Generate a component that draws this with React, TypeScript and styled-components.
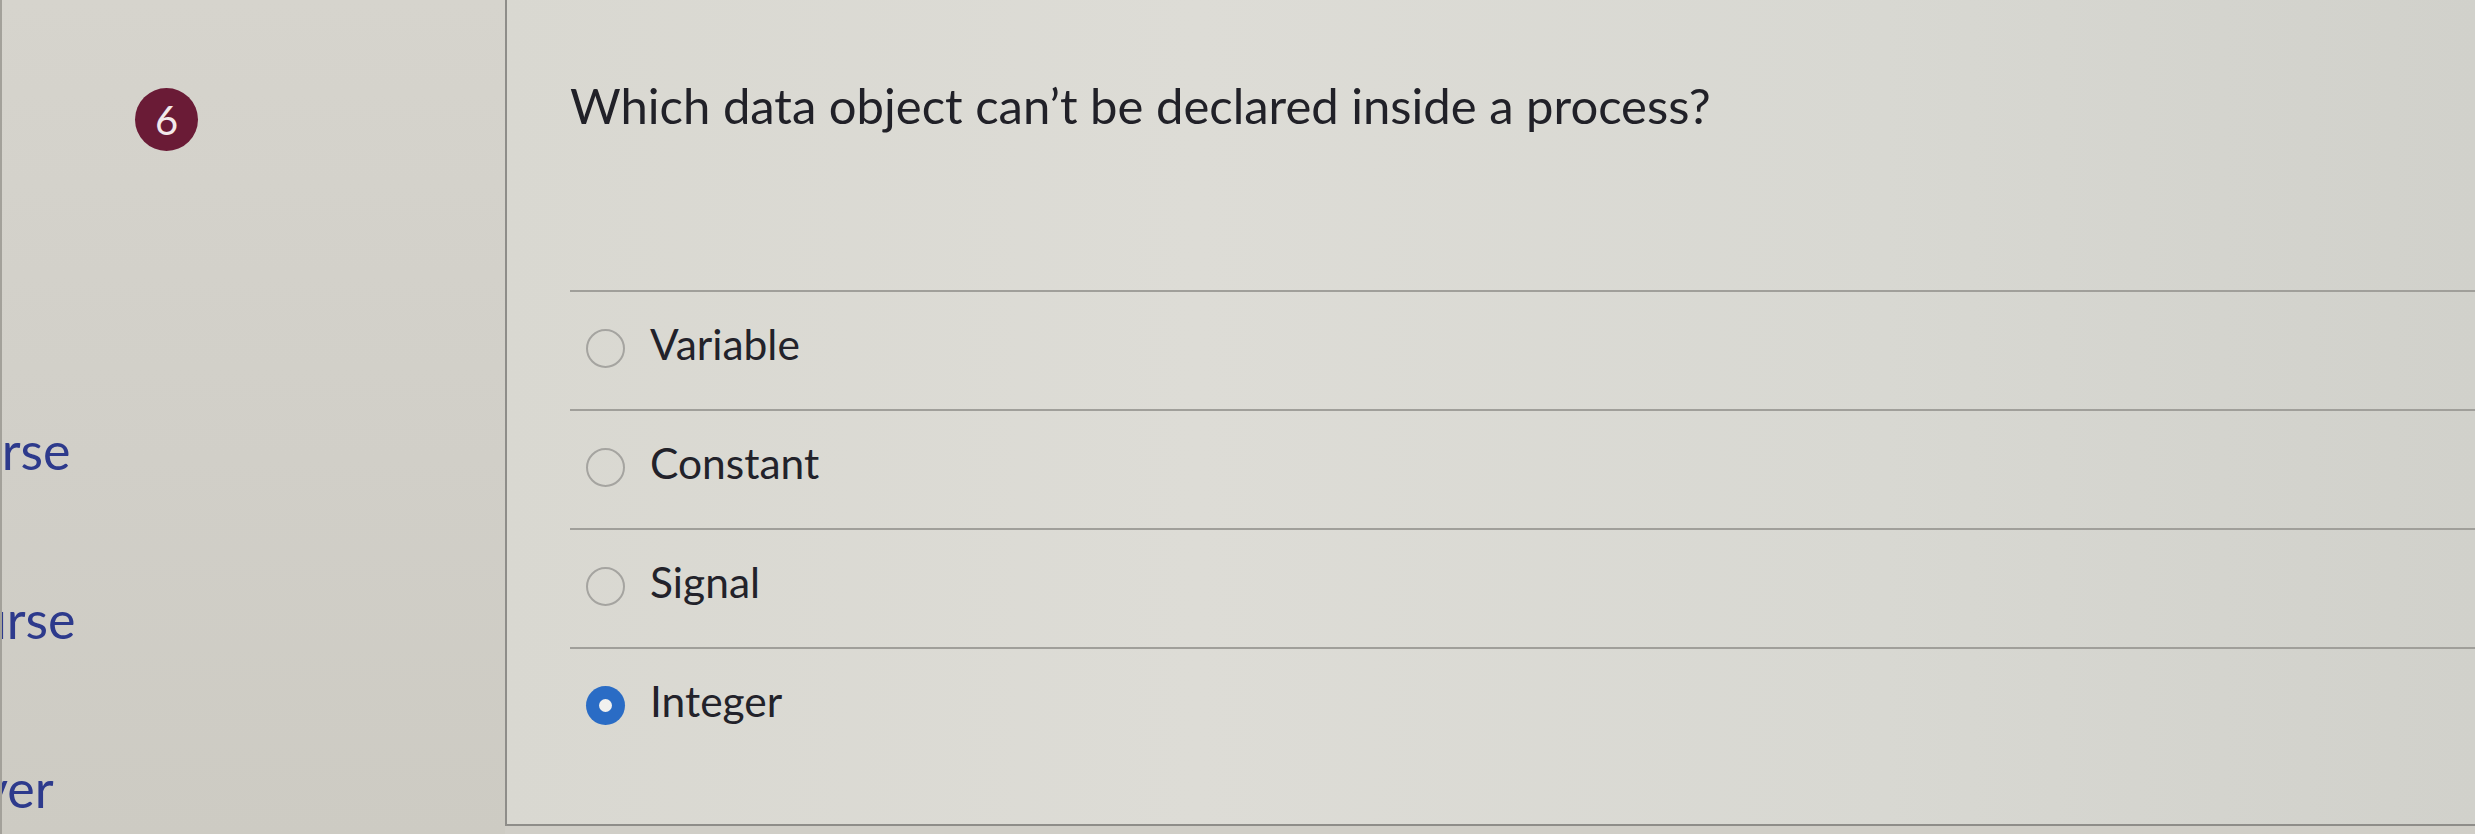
import React, { useState } from 'react';
import styled, { createGlobalStyle } from 'styled-components';

const options = ['Variable', 'Constant', 'Signal', 'Integer'];

const navLinks = [
  { label: 'Course', shift: -93 },
  { label: 'Course', shift: -88 },
  { label: 'Discover', shift: -148 },
];

const App: React.FC = () => {
  const [selected, setSelected] = useState('Integer');

  return (
    <>
      <GlobalStyle />
      <Page>
        <Sidebar>
          <NavList>
            {navLinks.map((link, i) => (
              <NavLink key={i} $shift={link.shift}>
                {link.label}
              </NavLink>
            ))}
          </NavList>
          <BadgeSlot>
            <Badge>6</Badge>
          </BadgeSlot>
        </Sidebar>

        <QuestionBox>
          <QuestionText>Which data object can’t be declared inside a process?</QuestionText>
          <OptionList>
            {options.map((opt, i) => (
              <OptionRow key={opt} $last={i === options.length - 1} onClick={() => setSelected(opt)}>
                <Radio $checked={selected === opt} />
                <OptionLabel>{opt}</OptionLabel>
              </OptionRow>
            ))}
          </OptionList>
        </QuestionBox>
      </Page>
    </>
  );
};

export default App;

const GlobalStyle = createGlobalStyle`
  html, body {
    margin: 0;
    padding: 0;
    overflow: hidden;
  }
  body {
    font-family: Lato, 'Open Sans', sans-serif;
    background: #cfcdc6;
  }
`;

const Page = styled.div`
  display: flex;
  width: 2475px;
  height: 834px;
  background: #d0cec7;
`;

const Sidebar = styled.aside`
  display: flex;
  width: 505px;
  flex-shrink: 0;
  box-sizing: border-box;
  border-left: 2px solid #a3a19a;
  background: linear-gradient(180deg, #d6d4cd 0%, #d1cfc8 55%, #cdcbc3 100%);
`;

const NavList = styled.nav`
  display: flex;
  flex-direction: column;
  width: 80px;
  padding-top: 366px;
  overflow: hidden;
`;

const NavLink = styled.a<{ $shift: number }>`
  display: block;
  margin-left: ${(p) => p.$shift}px;
  font-size: 52px;
  line-height: 169px;
  white-space: nowrap;
  color: #2d3a8c;
  text-decoration: none;
`;

const BadgeSlot = styled.div`
  padding-top: 88px;
  padding-left: 53px;
`;

const Badge = styled.div`
  display: flex;
  align-items: center;
  justify-content: center;
  width: 63px;
  height: 63px;
  border-radius: 50%;
  background: #6a1b36;
  color: #f2e9eb;
  font-size: 40px;
  line-height: 1;
`;

const QuestionBox = styled.section`
  display: flex;
  flex-direction: column;
  flex: 1;
  height: 826px;
  box-sizing: border-box;
  padding-left: 63px;
  border-left: 2px solid #8e8d89;
  border-bottom: 2px solid #8e8d89;
  background: linear-gradient(90deg, #d9d8d1 0%, #dddcd6 35%, #d8d8d2 70%, #d1d1cb 100%);
`;

const QuestionText = styled.h2`
  box-sizing: border-box;
  height: 290px;
  margin: 0;
  padding-top: 76px;
  font-size: 49px;
  font-weight: 400;
  line-height: 1.2;
  color: #212128;
`;

const OptionList = styled.div`
  display: flex;
  flex-direction: column;
  flex: 1;
`;

const OptionRow = styled.label<{ $last?: boolean }>`
  display: flex;
  align-items: flex-start;
  box-sizing: border-box;
  height: ${(p) => (p.$last ? 'auto' : '119px')};
  flex: ${(p) => (p.$last ? 1 : 'none')};
  padding-top: 26px;
  border-top: 2px solid #a09f9a;
  cursor: pointer;
`;

const Radio = styled.span<{ $checked: boolean }>`
  position: relative;
  flex-shrink: 0;
  width: 39px;
  height: 39px;
  margin: 11px 25px 0 16px;
  box-sizing: border-box;
  border-radius: 50%;
  border: ${(p) => (p.$checked ? 'none' : '2px solid #a5a4a0')};
  background: ${(p) => (p.$checked ? '#2a6cc5' : 'transparent')};

  &::after {
    content: '';
    display: ${(p) => (p.$checked ? 'block' : 'none')};
    position: absolute;
    top: 50%;
    left: 50%;
    width: 13px;
    height: 13px;
    margin: -6.5px 0 0 -6.5px;
    border-radius: 50%;
    background: #f1f1ef;
  }
`;

const OptionLabel = styled.span`
  font-size: 42.5px;
  line-height: 1.2;
  color: #22222a;
`;
